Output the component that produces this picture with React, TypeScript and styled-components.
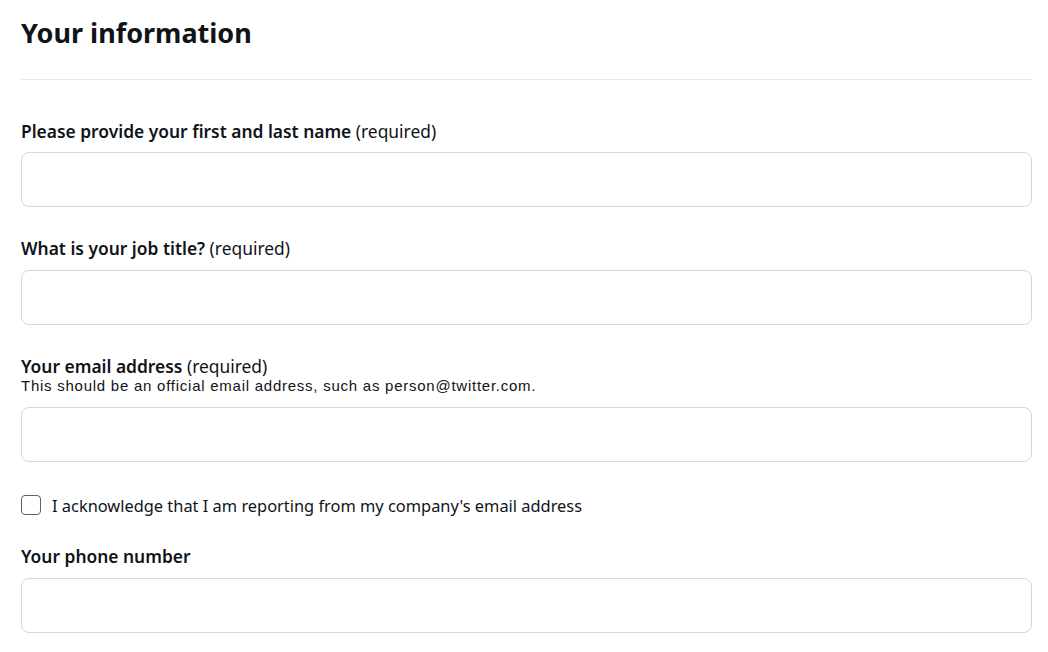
import React from 'react';
import styled, { createGlobalStyle } from 'styled-components';

const GlobalStyle = createGlobalStyle`
  body {
    margin: 0;
    background: #ffffff;
    font-family: "Noto Sans", "Segoe UI", Arial, sans-serif;
    color: #0f1419;
  }
`;

const Page = styled.div`
  padding: 0 16px 0 21px;
`;

const Heading = styled.h1`
  margin: 0;
  padding-top: 14px;
  font-size: 27px;
  line-height: 38px;
  font-weight: 700;
  color: #0f1419;
  height: 80px;
  box-sizing: border-box;
  border-bottom: 1px solid #e7e9ea;
  margin-bottom: 40px;
`;

const Field = styled.div<{ $gap?: number }>`
  display: flex;
  flex-direction: column;
  margin-bottom: ${(p) => p.$gap ?? 30}px;
`;

const Label = styled.label`
  font-size: 17.4px;
  line-height: 22px;
  font-weight: 600;
  color: #0f1419;

  span {
    font-weight: 400;
  }
`;

const Helper = styled.div`
  font-family: "Liberation Sans", Arial, sans-serif;
  font-size: 15px;
  line-height: 17px;
  letter-spacing: 0.75px;
  color: #0f1419;
`;

const Input = styled.input<{ $top?: number }>`
  margin-top: ${(p) => p.$top ?? 10}px;
  height: 55px;
  box-sizing: border-box;
  border: 1px solid #cfd9de;
  border-radius: 8px;
  padding: 0 12px;
  font: inherit;
  outline: none;
  background: #fff;
`;

const CheckRow = styled.label`
  display: flex;
  align-items: center;
  gap: 11px;
  height: 20px;
  margin-bottom: 30px;
  font-size: 16.4px;
  color: #0f1419;
`;

const Box = styled.input`
  appearance: none;
  margin: 0;
  width: 20px;
  height: 20px;
  border: 1.5px solid #536471;
  border-radius: 4px;
  box-sizing: border-box;
  background: #fff;
`;

export default function App() {
  return (
    <Page>
      <GlobalStyle />
      <Heading>Your information</Heading>
      <Field>
        <Label>
          Please provide your first and last name <span>(required)</span>
        </Label>
        <Input type="text" />
      </Field>
      <Field>
        <Label>
          What is your job title? <span>(required)</span>
        </Label>
        <Input type="text" $top={11} />
      </Field>
      <Field $gap={33}>
        <Label>
          Your email address <span>(required)</span>
        </Label>
        <Helper>This should be an official email address, such as person@twitter.com.</Helper>
        <Input type="email" $top={13} />
      </Field>
      <CheckRow>
        <Box type="checkbox" />
        I acknowledge that I am reporting from my company's email address
      </CheckRow>
      <Field $gap={20}>
        <Label>Your phone number</Label>
        <Input type="tel" $top={11} />
      </Field>
    </Page>
  );
}
